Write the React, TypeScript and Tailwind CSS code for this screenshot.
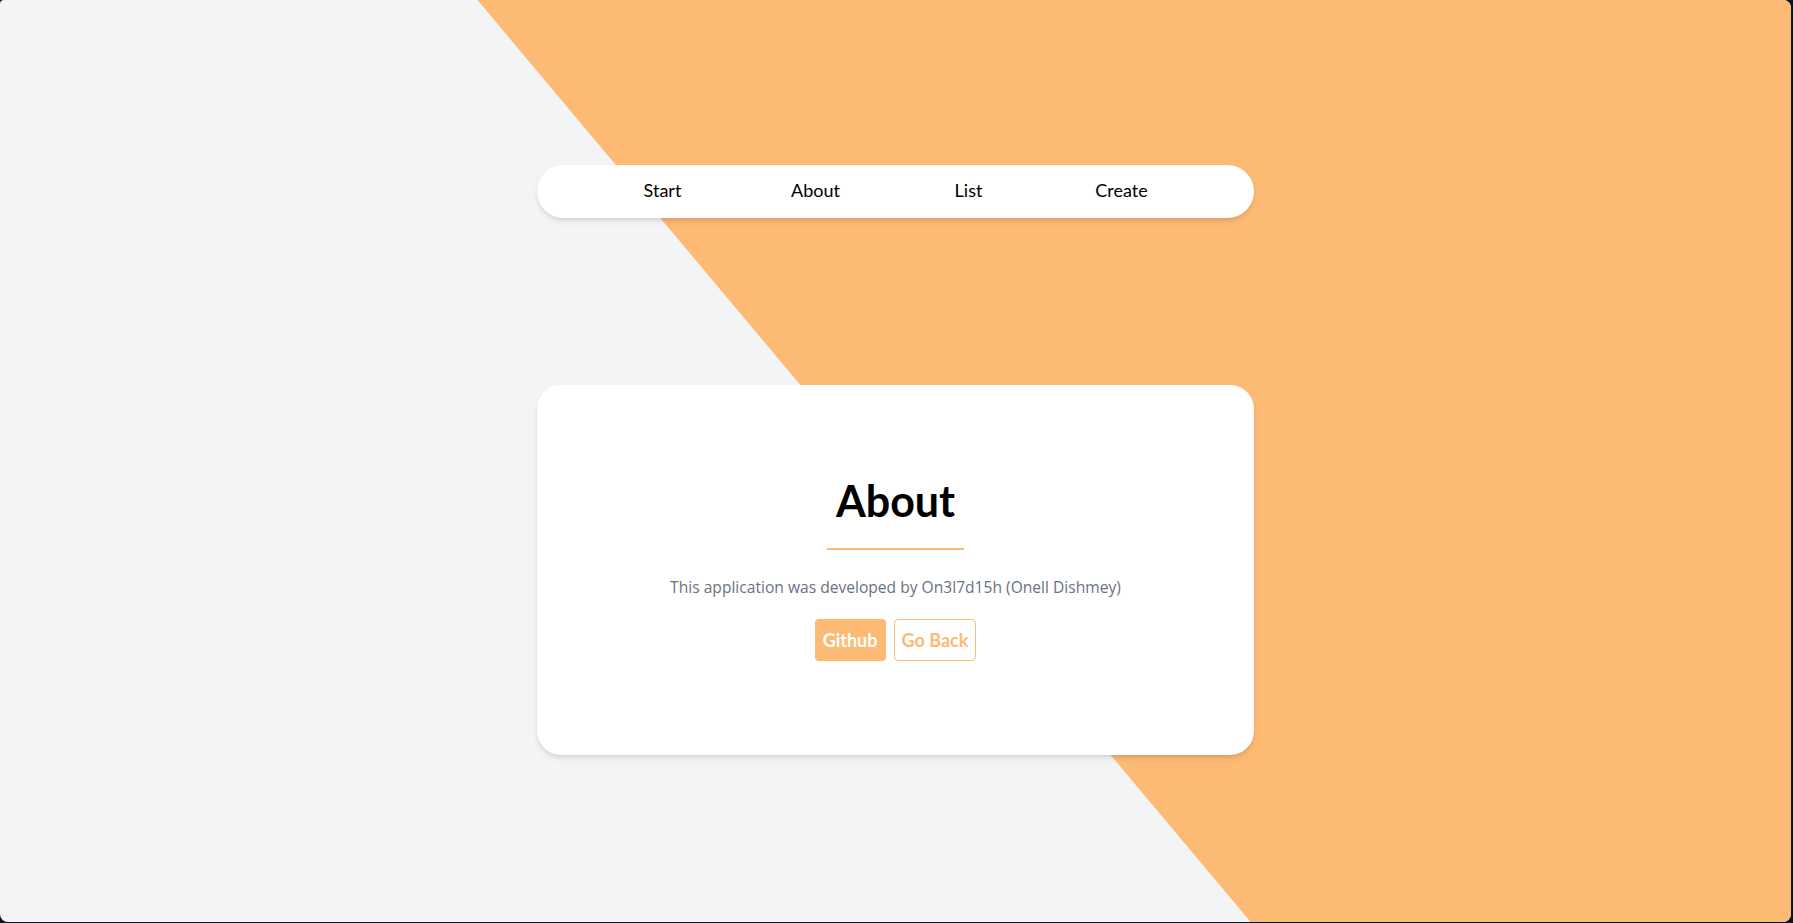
const navItems = ["Start", "About", "List", "Create"];

export default function App() {
  return (
    <div className="h-[923px] w-full bg-[#12121c]">
      <main
        className="relative mr-[2px] flex h-[922px] flex-col items-center overflow-hidden rounded-lg rounded-tl-sm bg-gray-100"
        style={{ fontFamily: 'Lato, "Open Sans", sans-serif' }}
      >
        <div className="absolute inset-0 bg-[#fdba74] [clip-path:polygon(26.66%_0,100%_0,100%_100%,69.83%_100%)]" />

        <nav className="relative mt-[165px] flex h-[53px] w-[717px] items-center justify-center rounded-full bg-white pr-[7px] pb-[4px] shadow-md">
          {navItems.map((item) => (
            <a key={item} href="#" className="w-[153px] text-center text-lg text-black">
              {item}
            </a>
          ))}
        </nav>

        <section className="relative mt-[167px] flex h-[370px] w-[717px] flex-col items-center rounded-3xl bg-white pt-[94px] shadow-md">
          <h1 className="text-[43px] leading-none font-bold text-black">About</h1>
          <hr className="mt-[26px] w-[137px] border-t-2 border-[#fdba74]" />
          <p className="mt-[25px] font-['Open_Sans'] text-[15.6px] leading-6 text-gray-500">
            This application was developed by On3l7d15h (Onell Dishmey)
          </p>
          <div className="mt-[20px] flex gap-2">
            <a
              href="#"
              className="rounded bg-[#fdba74] px-2 py-[7px] text-lg font-bold text-white"
            >
              Github
            </a>
            <a
              href="#"
              className="rounded border border-[#fdba74] bg-white px-[7px] py-[6px] text-lg font-bold text-[#fdba74]"
            >
              Go Back
            </a>
          </div>
        </section>
      </main>
    </div>
  );
}
